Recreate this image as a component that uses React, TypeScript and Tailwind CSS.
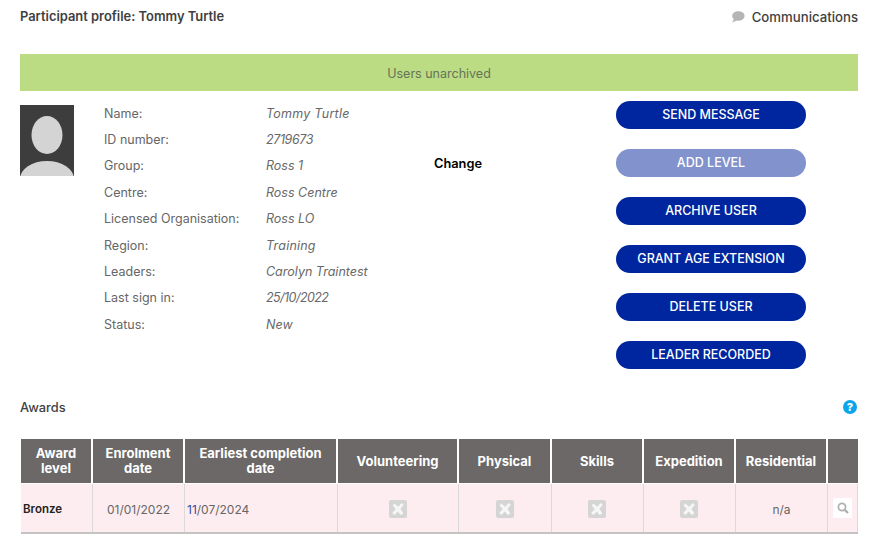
const font = "font-['Inter','Noto_Sans',sans-serif]";

const details = [
  ['Name:', 'Tommy Turtle', 'tracking-[0.25px]'],
  ['ID number:', '2719673', 'tracking-[-0.4px]'],
  ['Group:', 'Ross 1', 'tracking-normal'],
  ['Centre:', 'Ross Centre', 'tracking-normal'],
  ['Licensed Organisation:', 'Ross LO', 'tracking-normal'],
  ['Region:', 'Training', 'tracking-[0.2px]'],
  ['Leaders:', 'Carolyn Traintest', 'tracking-normal'],
  ['Last sign in:', '25/10/2022', 'tracking-[-0.55px]'],
  ['Status:', 'New', 'tracking-normal'],
];

const actions = ['SEND MESSAGE', 'ADD LEVEL', 'ARCHIVE USER', 'GRANT AGE EXTENSION', 'DELETE USER', 'LEADER RECORDED'];

const columns = 'grid grid-cols-[72px_92px_153px_121px_93px_92px_92px_92px_30px]';

function CrossBox() {
  return (
    <svg width="18" height="18" viewBox="0 0 18 18">
      <rect width="18" height="18" rx="2" fill="#d6d5d5" />
      <path d="M5.4 3.6 9.2 6.8 12.6 3 14.8 4.8 11.4 8.8 14.4 13.4 11.6 15 8.8 11.4 5.4 15 3.2 13 6.8 9 3.6 5.4Z" fill="#f7f6f6" />
    </svg>
  );
}

function HeadCell({ children }: { children?: React.ReactNode }) {
  return (
    <div className="mr-[2px] flex h-[44px] items-center justify-center bg-[#6b6867] px-1 text-center text-[13px] leading-[15px] font-bold text-white last:mr-0">
      {children}
    </div>
  );
}

function RowCell({ children, className = '' }: { children?: React.ReactNode; className?: string }) {
  return <div className={`flex h-[48px] items-center border-r border-[#dcd9da] ${className}`}>{children}</div>;
}

export default function App() {
  return (
    <div className={`${font} h-[551px] w-[871px] overflow-hidden bg-white pr-[13px] pl-5 text-[13px]`}>
      <div className="flex h-[54px] items-start justify-between pt-[9px]">
        <span className="text-[12.9px] leading-[16px] font-semibold text-[#3f3f3f]">Participant profile: Tommy Turtle</span>
        <span className="flex items-center gap-[7px] text-[13.2px] leading-[16px] font-medium text-[#3f3f3f]">
          <svg width="14" height="12" viewBox="0 0 14 12">
            <ellipse cx="7.4" cy="5" rx="6.2" ry="4.8" fill="#b5b5b5" />
            <path d="M3 8 1 11.5 6 9.4Z" fill="#b5b5b5" />
          </svg>
          Communications
        </span>
      </div>

      <div className="flex h-[37px] items-center justify-center bg-[#bcdc83] pt-[4px] text-[12.5px] text-[#667359]">Users unarchived</div>

      <div className="flex">
        <div className="mt-[14px] h-[71px] w-[54px] shrink-0 overflow-hidden bg-[#3d3d3d]">
          <svg width="54" height="71" viewBox="0 0 54 71">
            <ellipse cx="27" cy="30" rx="15.5" ry="19" fill="#d4d4d4" />
            <ellipse cx="27" cy="74" rx="27" ry="18" fill="#d4d4d4" />
          </svg>
        </div>

        <div className="mt-[10px] ml-[30px] w-[330px] shrink-0">
          {details.map(([label, value, spacing]) => (
            <div key={label} className="flex h-[26.35px] items-center text-[12.5px] text-[#666]">
              <span className="w-[162px]">{label}</span>
              <span className={`text-[#686868] italic ${spacing}`}>{value}</span>
            </div>
          ))}
        </div>

        <div className="mt-[64px] w-[182px] shrink-0 text-[12.8px] leading-[18px] font-semibold text-black">Change</div>

        <div className="mt-[10px] flex w-[190px] shrink-0 flex-col gap-5">
          {actions.map((a) => (
            <button
              key={a}
              className={`h-[28px] rounded-[14px] pt-px text-[12.5px] font-medium text-white ${a === 'ADD LEVEL' ? 'bg-[#8192cc]' : 'bg-[#00269f]'}`}
            >
              {a}
            </button>
          ))}
        </div>
      </div>

      <div className="mt-[27px] flex h-[22px] items-center justify-between">
        <span className="pt-px text-[12.8px] font-medium text-[#3f3f3f]">Awards</span>
        <span className="mr-px flex h-[14px] w-[14px] items-center justify-center rounded-full bg-[#0aa5ea] text-[11px] leading-none font-extrabold text-white">?</span>
      </div>

      <div className="mt-[21px] ml-px border-b-2 border-[#c4c2c2]">
        <div className={columns}>
          {['Award level', 'Enrolment date', 'Earliest completion date', 'Volunteering', 'Physical', 'Skills', 'Expedition', 'Residential', ''].map((h, i) => (
            <HeadCell key={i}>{h}</HeadCell>
          ))}
        </div>
        <div className={`${columns} mt-px bg-[#feedf0]`}>
          <RowCell className="pt-[3px] pl-[2px] text-[11.5px] font-semibold text-[#222]">Bronze</RowCell>
          <RowCell className="justify-center pt-[3px] text-[12px] text-[#666]">01/01/2022</RowCell>
          <RowCell className="pt-[3px] pl-[2px] text-[12px] text-[#666]"><span className="text-[#2f4f9f]">11</span>/07/2024</RowCell>
          <RowCell className="justify-center pt-px"><CrossBox /></RowCell>
          <RowCell className="justify-center pt-px"><CrossBox /></RowCell>
          <RowCell className="justify-center pt-px pr-[2px]"><CrossBox /></RowCell>
          <RowCell className="justify-center pt-px pr-[2px]"><CrossBox /></RowCell>
          <RowCell className="justify-center pt-[4px] text-[12px] text-[#666]">n/a</RowCell>
          <RowCell className="justify-center">
            <span className="flex h-5 w-[19px] items-center justify-center bg-white">
              <svg width="12" height="12" viewBox="0 0 12 12" fill="none" stroke="#b0b0b0">
                <circle cx="5" cy="5" r="3.6" strokeWidth="1.7" />
                <path d="M7.8 7.8 11 11" strokeWidth="2.4" />
              </svg>
            </span>
          </RowCell>
        </div>
      </div>
    </div>
  );
}
